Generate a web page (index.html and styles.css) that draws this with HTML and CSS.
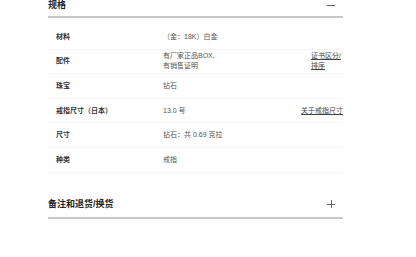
FILE: index.html
```html
<!DOCTYPE html>
<html lang="zh">
<head>
<meta charset="utf-8">
<link rel="stylesheet" href="styles.css">
</head>
<body>
<div class="wrap">
  <section class="sec">
    <div class="sec-head">
      <h2 class="sec-title">规格</h2>
      <span class="icon icon-minus"></span>
    </div>
    <div class="spec">
      <div class="row">
        <div class="label">材料</div>
        <div class="value">（金：18K）白金</div>
        <div class="link"></div>
      </div>
      <div class="row">
        <div class="label">配件</div>
        <div class="value">有厂家正品BOX,<br>有销售证明</div>
        <div class="link link-narrow"><a href="#">证书区分/排序</a></div>
      </div>
      <div class="row">
        <div class="label">珠宝</div>
        <div class="value">钻石</div>
        <div class="link"></div>
      </div>
      <div class="row">
        <div class="label">戒指尺寸（日本）</div>
        <div class="value">13.0 号</div>
        <div class="link"><a href="#">关于戒指尺寸</a></div>
      </div>
      <div class="row">
        <div class="label">尺寸</div>
        <div class="value">钻石：共 0.69 克拉</div>
        <div class="link"></div>
      </div>
      <div class="row">
        <div class="label">种类</div>
        <div class="value">戒指</div>
        <div class="link"></div>
      </div>
    </div>
  </section>
  <section class="sec sec-closed">
    <div class="sec-head">
      <h2 class="sec-title">备注和退货/换货</h2>
      <span class="icon icon-plus"></span>
    </div>
  </section>
</div>
</body>
</html>
```
FILE: styles.css
```css
html, body {
  margin: 0;
  padding: 0;
  background: #fff;
}
body {
  font-family: "Liberation Sans", "Noto Sans CJK SC", sans-serif;
  color: #333;
}
.wrap {
  margin-left: 48px;
  width: 295px;
  overflow: hidden;
}
.sec-head {
  display: flex;
  align-items: center;
  justify-content: space-between;
  padding: 0 8px 5px 0;
  border-bottom: 2px solid #c8c8c8;
  height: 11px;
}
.sec-title {
  margin: 0;
  font-size: 9px;
  line-height: 11px;
  font-weight: bold;
  color: #222;
}
.icon {
  position: relative;
  width: 8px;
  height: 8px;
  display: block;
}
.icon::before,
.icon::after {
  content: "";
  position: absolute;
  background: #666;
}
.icon::before {
  left: 0;
  right: 0;
  top: 3.5px;
  height: 1px;
}
.icon-plus::after {
  top: 0;
  bottom: 0;
  left: 3.5px;
  width: 1px;
}
.spec {
  padding-top: 7px;
}
.row {
  display: grid;
  grid-template-columns: 107px 1fr auto;
  align-items: center;
  height: 24.6px;
  box-sizing: border-box;
  padding-left: 8px;
  border-bottom: 1px solid #f3f3f3;
  font-size: 7px;
  line-height: 10px;
}
.label {
  font-weight: bold;
  color: #333;
}
.value {
  color: #555;
}
.link {
  justify-self: end;
  white-space: nowrap;
}
.link a {
  color: #444;
  text-decoration: underline;
}
.link-narrow {
  width: 32px;
  white-space: normal;
  justify-self: start;
}
.sec-closed {
  padding-top: 26px;
}
.sec-closed .sec-head {
  padding-bottom: 7px;
}
```
